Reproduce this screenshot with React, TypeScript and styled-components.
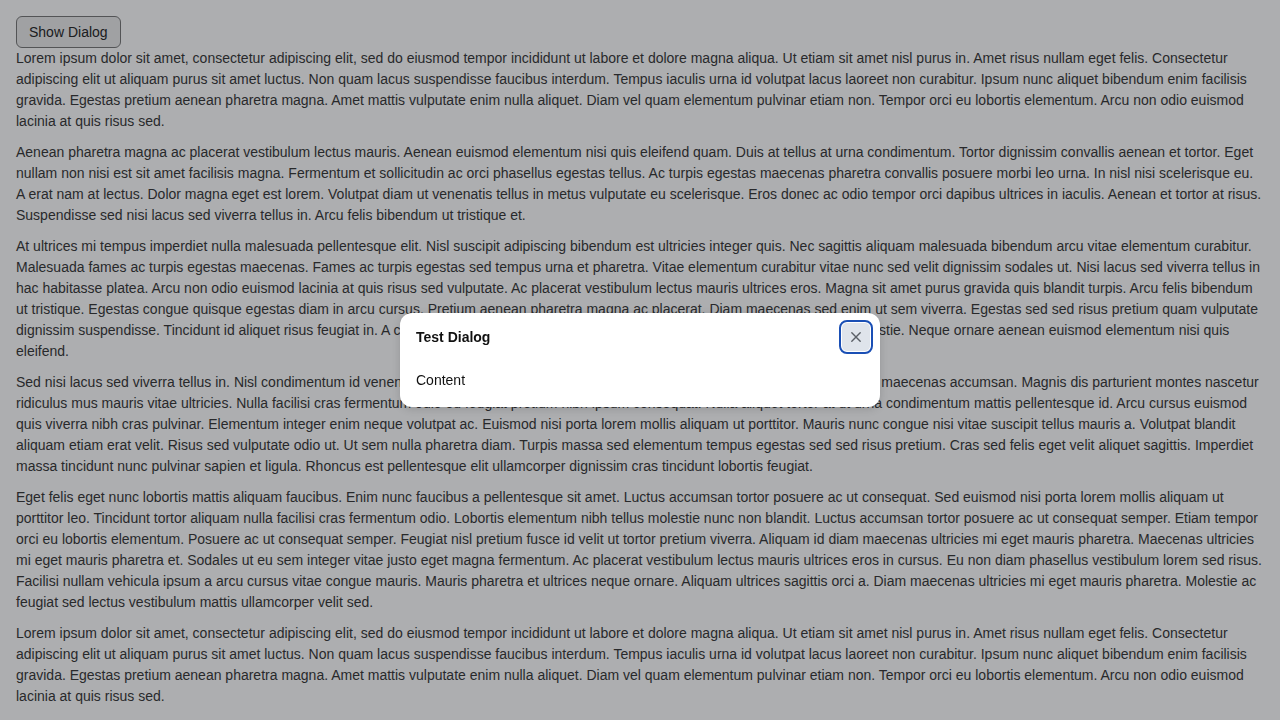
import React from "react";
import styled, { createGlobalStyle } from "styled-components";

const GlobalStyle = createGlobalStyle`
  html, body { margin: 0; padding: 0; background: #ffffff; }
  body { font-family: "Liberation Sans", Arial, sans-serif; }
  * { box-sizing: border-box; }
`;

const Page = styled.div`
  padding: 16px;
  font-size: 14px;
  line-height: 21px;
  color: #333333;
`;

const ShowButton = styled.button`
  display: block;
  font-family: "Liberation Sans", Arial, sans-serif;
  font-size: 14px;
  line-height: 18px;
  padding: 6px 12px;
  color: #222222;
  background: #ebebeb;
  border: 1px solid #767676;
  border-radius: 6px;
  cursor: pointer;
`;

const Paragraph = styled.p`
  margin: 0 0 10px;
`;

const Overlay = styled.div`
  position: fixed;
  inset: 0;
  background: rgba(20, 24, 30, 0.35);
  display: flex;
  align-items: center;
  justify-content: center;
`;

const Dialog = styled.div`
  width: 480px;
  background: #ffffff;
  border-radius: 12px;
  box-shadow: 0 2px 8px rgba(0, 0, 0, 0.15);
  color: #111111;
  font-size: 14px;
  line-height: 21px;
`;

const Header = styled.div`
  display: flex;
  align-items: center;
  justify-content: space-between;
  padding: 10px 10px 10px 16px;
`;

const Title = styled.h2`
  margin: 0;
  font-size: 14px;
  font-weight: 700;
`;

const CloseButton = styled.button`
  width: 28px;
  height: 28px;
  padding: 0;
  display: flex;
  align-items: center;
  justify-content: center;
  background: #dfe4eb;
  border: none;
  border-radius: 5px;
  outline: 2px solid #1a4fb5;
  outline-offset: 1px;
  color: #5a5f66;
  cursor: pointer;
`;

const Body = styled.div`
  padding: 9px 16px 16px;
`;

const p1 =
  "Lorem ipsum dolor sit amet, consectetur adipiscing elit, sed do eiusmod tempor incididunt ut labore et dolore magna aliqua. Ut etiam sit amet nisl purus in. Amet risus nullam eget felis. Consectetur adipiscing elit ut aliquam purus sit amet luctus. Non quam lacus suspendisse faucibus interdum. Tempus iaculis urna id volutpat lacus laoreet non curabitur. Ipsum nunc aliquet bibendum enim facilisis gravida. Egestas pretium aenean pharetra magna. Amet mattis vulputate enim nulla aliquet. Diam vel quam elementum pulvinar etiam non. Tempor orci eu lobortis elementum. Arcu non odio euismod lacinia at quis risus sed.";

const paragraphs = [
  p1,
  "Aenean pharetra magna ac placerat vestibulum lectus mauris. Aenean euismod elementum nisi quis eleifend quam. Duis at tellus at urna condimentum. Tortor dignissim convallis aenean et tortor. Eget nullam non nisi est sit amet facilisis magna. Fermentum et sollicitudin ac orci phasellus egestas tellus. Ac turpis egestas maecenas pharetra convallis posuere morbi leo urna. In nisl nisi scelerisque eu. A erat nam at lectus. Dolor magna eget est lorem. Volutpat diam ut venenatis tellus in metus vulputate eu scelerisque. Eros donec ac odio tempor orci dapibus ultrices in iaculis. Aenean et tortor at risus. Suspendisse sed nisi lacus sed viverra tellus in. Arcu felis bibendum ut tristique et.",
  "At ultrices mi tempus imperdiet nulla malesuada pellentesque elit. Nisl suscipit adipiscing bibendum est ultricies integer quis. Nec sagittis aliquam malesuada bibendum arcu vitae elementum curabitur. Malesuada fames ac turpis egestas maecenas. Fames ac turpis egestas sed tempus urna et pharetra. Vitae elementum curabitur vitae nunc sed velit dignissim sodales ut. Nisi lacus sed viverra tellus in hac habitasse platea. Arcu non odio euismod lacinia at quis risus sed vulputate. Ac placerat vestibulum lectus mauris ultrices eros. Magna sit amet purus gravida quis blandit turpis. Arcu felis bibendum ut tristique. Egestas congue quisque egestas diam in arcu cursus. Pretium aenean pharetra magna ac placerat. Diam maecenas sed enim ut sem viverra. Egestas sed sed risus pretium quam vulputate dignissim suspendisse. Tincidunt id aliquet risus feugiat in. A condimentum vitae sapien pellentesque habitant morbi tristique senectus molestie. Neque ornare aenean euismod elementum nisi quis eleifend.",
  "Sed nisi lacus sed viverra tellus in. Nisl condimentum id venenatis a condimentum vitae sapien pellentesque. Suscipit tellus mauris ac diam maecenas accumsan. Magnis dis parturient montes nascetur ridiculus mus mauris vitae ultricies. Nulla facilisi cras fermentum odio eu feugiat pretium nibh ipsum consequat. Nulla aliquet tortor at ut urna condimentum mattis pellentesque id. Arcu cursus euismod quis viverra nibh cras pulvinar. Elementum integer enim neque volutpat ac. Euismod nisi porta lorem mollis aliquam ut porttitor. Mauris nunc congue nisi vitae suscipit tellus mauris a. Volutpat blandit aliquam etiam erat velit. Risus sed vulputate odio ut. Ut sem nulla pharetra diam. Turpis massa sed elementum tempus egestas sed sed risus pretium. Cras sed felis eget velit aliquet sagittis. Imperdiet massa tincidunt nunc pulvinar sapien et ligula. Rhoncus est pellentesque elit ullamcorper dignissim cras tincidunt lobortis feugiat.",
  "Eget felis eget nunc lobortis mattis aliquam faucibus. Enim nunc faucibus a pellentesque sit amet. Luctus accumsan tortor posuere ac ut consequat. Sed euismod nisi porta lorem mollis aliquam ut porttitor leo. Tincidunt tortor aliquam nulla facilisi cras fermentum odio. Lobortis elementum nibh tellus molestie nunc non blandit. Luctus accumsan tortor posuere ac ut consequat semper. Etiam tempor orci eu lobortis elementum. Posuere ac ut consequat semper. Feugiat nisl pretium fusce id velit ut tortor pretium viverra. Aliquam id diam maecenas ultricies mi eget mauris pharetra. Maecenas ultricies mi eget mauris pharetra et. Sodales ut eu sem integer vitae justo eget magna fermentum. Ac placerat vestibulum lectus mauris ultrices eros in cursus. Eu non diam phasellus vestibulum lorem sed risus. Facilisi nullam vehicula ipsum a arcu cursus vitae congue mauris. Mauris pharetra et ultrices neque ornare. Aliquam ultrices sagittis orci a. Diam maecenas ultricies mi eget mauris pharetra. Molestie ac feugiat sed lectus vestibulum mattis ullamcorper velit sed.",
  p1,
];

const CloseIcon = () => (
  <svg width="12" height="12" viewBox="0 0 12 12" aria-hidden="true">
    <path d="M1.8 1.8 L10.2 10.2 M10.2 1.8 L1.8 10.2" stroke="currentColor" strokeWidth="1.4" strokeLinecap="round" />
  </svg>
);

export default function App() {
  return (
    <>
      <GlobalStyle />
      <Page>
        <ShowButton>Show Dialog</ShowButton>
        {paragraphs.map((t, i) => (
          <Paragraph key={i}>{t}</Paragraph>
        ))}
      </Page>
      <Overlay>
        <Dialog role="dialog" aria-label="Test Dialog">
          <Header>
            <Title>Test Dialog</Title>
            <CloseButton aria-label="Close">
              <CloseIcon />
            </CloseButton>
          </Header>
          <Body>Content</Body>
        </Dialog>
      </Overlay>
    </>
  );
}
